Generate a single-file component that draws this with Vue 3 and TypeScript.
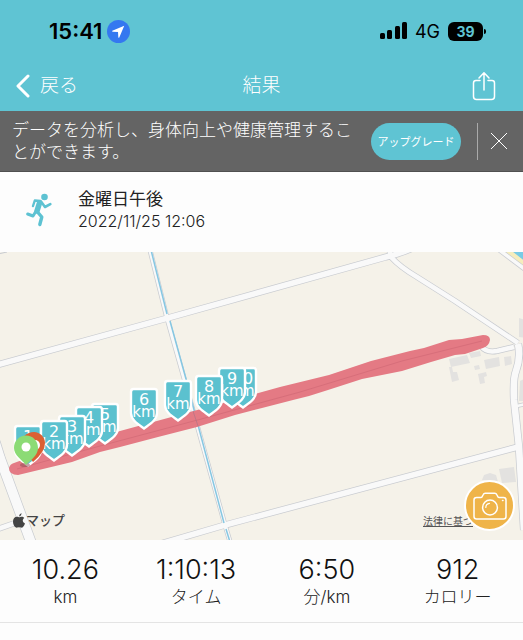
<script setup lang="ts">
interface Pin { km: number; x: number; y: number }
interface Stat { value: string; label: string }

const pins: Pin[] = [
  { km: 10, x: 243, y: 367 },
  { km: 9, x: 232, y: 367 },
  { km: 8, x: 209, y: 375 },
  { km: 7, x: 178, y: 380 },
  { km: 6, x: 144, y: 388 },
  { km: 5, x: 105, y: 403 },
  { km: 4, x: 89, y: 406 },
  { km: 3, x: 72, y: 415 },
  { km: 1, x: 28, y: 425 },
  { km: 2, x: 54, y: 420 },
]

const stats: Stat[] = [
  { value: '10.26', label: 'km' },
  { value: '1:10:13', label: 'タイム' },
  { value: '6:50', label: '分/km' },
  { value: '912', label: 'カロリー' },
]

interface Road { d: string; width: number }

const roads: Road[] = [
  { d: 'M-5 365.500L166 318.500L386 257Q400 254 415 247', width: 7 },
  { d: 'M149 246L167 318L182 371L225 525L231 545', width: 5 },
  { d: 'M388 244L391 257Q400 267 417 277L455 301L518 343', width: 6 },
  { d: 'M-5 442L0 458L32 545', width: 11 },
  { d: 'M-5 530L18 522', width: 6 },
  { d: 'M160 544L225 525L518 447', width: 7 },
  { d: 'M498 249L526 270', width: 5 },
  { d: 'M481 346Q486 353 497 351L514 347', width: 6 },
  { d: 'M518 344Q521 357 516 371Q513 378 514 400L519 447L524 530', width: 8 },
  { d: 'M517 406L526 404', width: 4 },
]
</script>

<template>
  <main class="screen">
    <header class="top">
      <div class="status">
        <div class="clock">
          <span>15:41</span>
          <svg class="locate" viewBox="0 0 24 24" aria-hidden="true">
            <circle cx="12" cy="12" r="12" fill="#3478f0" />
            <path d="M18 6L5.500 11.200Q5 12 6 12.200L11.500 12.500L11.800 18Q12.200 19 12.800 18.200Z" fill="#fff" />
          </svg>
        </div>
        <div class="signals">
          <svg class="bars" viewBox="0 0 28 18" aria-hidden="true">
            <rect x="0" y="11" width="5" height="6" rx="1.500" />
            <rect x="7" y="8" width="5" height="9" rx="1.500" />
            <rect x="15" y="4" width="5" height="13" rx="1.500" />
            <rect x="22" y="0" width="5" height="17" rx="1.500" />
          </svg>
          <span class="network">4G</span>
          <span class="battery">39</span>
        </div>
      </div>
      <nav class="nav">
        <button class="back" type="button">
          <svg viewBox="0 0 16 24" aria-hidden="true"><path d="M13 2L3 12L13 22" /></svg>
          <span>戻る</span>
        </button>
        <h1>結果</h1>
        <button class="share" type="button" aria-label="共有">
          <svg viewBox="0 0 24 30" aria-hidden="true">
            <path d="M8 9.500H4Q1.500 9.500 1.500 12V25.500Q1.500 28.500 4.500 28.500H19.500Q22.500 28.500 22.500 25.500V12Q22.500 9.500 20 9.500H16M12 19V2M7 7L12 1.800L17 7" />
          </svg>
        </button>
      </nav>
    </header>

    <section class="promo">
      <p>データを分析し、身体向上や健康管理することができます。</p>
      <button class="upgrade" type="button">アップグレード</button>
      <button class="close" type="button" aria-label="閉じる">
        <svg viewBox="0 0 18 18" aria-hidden="true"><path d="M1 1L17 17M17 1L1 17" /></svg>
      </button>
    </section>

    <section class="activity">
      <svg class="runner" viewBox="0 0 26 34" aria-hidden="true">
        <circle cx="18.500" cy="4" r="3.300" fill="#5dc2d2" stroke="none" />
        <path d="M7 13L8.800 7.500L14.500 8" stroke-width="2.400" />
        <path d="M15 8.500L19 14L24.300 11.200" stroke-width="2.600" />
        <path d="M13.500 10L11 18" stroke-width="5.500" />
        <path d="M9.500 19L7 23L1.700 21" stroke-width="3" />
        <path d="M11.500 19L15.800 24L13.800 31.500" stroke-width="3.400" />
      </svg>
      <div>
        <h2>金曜日午後</h2>
        <time datetime="2022-11-25T12:06">2022/11/25 12:06</time>
      </div>
    </section>

    <section class="map">
      <svg class="canvas" viewBox="0 252 523 288" role="img" aria-label="ルート">
        <rect y="252" width="523" height="288" fill="#f5f2e9" />
        <path d="M498 248L526 270V248Z" fill="#f6edbd" />
        <path d="M508 248L526 262V248Z" fill="#78cbe5" />
        <g fill="none" stroke="#c8cbd0">
          <path v-for="road in roads" :key="road.d" :d="road.d" :stroke-width="road.width" />
          <path d="M-2 254L7 252" />
        </g>
        <g fill="none" stroke="#f9f9f9">
          <path v-for="road in roads" :key="road.d" :d="road.d" :stroke-width="road.width - 1.4" />
        </g>
        <path d="M151 250L167 314M170 321L186 379L198 425L224 523M226 529L230 542" fill="none" stroke="#86c7e2" stroke-width="1.500" />
        <g fill="#e3e2e0">
          <path d="M449 359L467 355L470 363L451 367Z" />
          <path d="M449 367H452L453 372L457 372L459 380L452 382Z" />
          <path d="M469 353L480 351L481 356L471 358Z" />
          <path d="M474 366L479 365L480 369L475 370Z" />
          <path d="M484 360L499 357L500 366L486 369Z" />
          <path d="M478 374L486 372L487 376L484 377L485 383L480 384Z" />
          <path d="M504 357L511 356L512 364L505 366Z" />
          <path d="M519 318L526 320V338L519 337Z" />
          <path d="M520 381L526 378V401H519Z" />
          <path d="M499 469L514 467L516 482L502 483Z" />
          <path d="M482 480L484 475L490 473L496 475L498 482Z" />
        </g>

        <path d="M14 463L61 446L120 431L201 409L262 392L280 387L329 375L371 361L410 351L424 348L449 340L462 339L483 335Q490 335 490 340Q489 346 483 348L465 354L455 355L431 362L402 371L362 379L328 390L309 396L293 400L262 408L235 415L197 427L158 437L120 447L100 452L72 462L18 475Q9 475 9 468Q10 464 14 463Z" fill="#e47a84" />
        <path d="M17 469L100 446L205 418L300 392L402 361L482 341" fill="none" stroke="#ca6270" stroke-opacity=".5" />
        <path d="M193 411L198 426" fill="none" stroke="#a97387" stroke-opacity=".6" />

        <g v-for="pin in pins" :key="pin.km" :transform="`translate(${pin.x} ${pin.y})`">
          <path d="M-10.500 1Q-13 1 -13 4V25C-13 32 -6 36 0 40.500C6 36 13 32 13 25V4Q13 1 10.500 1Z" fill="#5bc1cf" stroke="#fff" stroke-width="2.400" />
          <text class="pin-number" y="17">{{ pin.km }}</text>
          <text class="pin-unit" y="29">km</text>
        </g>

        <path d="M34 432C27 432 21 437 21 444C21 452 30 457 33 462Q45 452 45 443C45 437 40 432 34 432Z" fill="#db6032" />
        <circle cx="35" cy="445" r="5" fill="#fff" />
        <ellipse cx="25" cy="465" rx="5" ry="2" fill="#874850" opacity=".5" />
        <path d="M26 435.500C19 435.500 14 441 14 448C14 455 22 460 26 465C31 460 38 455 38 448C38 441 33 435.500 26 435.500Z" fill="#8cdb75" />
        <circle cx="26" cy="447" r="4.500" fill="#fff" />
      </svg>

      <div class="brand">
        <svg viewBox="0 0 12 15" aria-hidden="true">
          <path d="M8.500 0Q8.500 3 6 3.500Q6 1 8.500 0ZM6 4.300C7 4.300 9.600 2.700 11.300 5C9 6.500 9.300 9.500 12 10.500C11 13.500 9.500 15 8 14.600Q6 13.700 4.200 14.600C2 15.200 0 11.500 0 8.500C0 4.500 3 3 6 4.300Z" fill="currentColor" />
        </svg>
        <span>マップ</span>
      </div>
      <a class="legal" href="#legal">法律に基づ</a>
      <button class="camera" type="button" aria-label="写真を追加">
        <svg viewBox="0 0 34 28" aria-hidden="true">
          <path d="M3.500 5.500H8Q9 5.500 9.500 4L10.300 2.500Q10.800 1.200 12.200 1.200H21.800Q23.200 1.200 23.700 2.500L24.500 4Q25 5.500 26 5.500H30.500Q33 5.500 33 8V24.500Q33 27 30.500 27H3.500Q1 27 1 24.500V8Q1 5.500 3.500 5.500Z" />
          <circle cx="17" cy="15.500" r="7.400" />
          <path d="M12.800 15.500Q12.800 11.800 16.500 11.300" stroke-width="1.200" />
          <path d="M29.500 8.500H30" />
        </svg>
      </button>
    </section>

    <dl class="stats">
      <div v-for="stat in stats" :key="stat.label">
        <dt>{{ stat.label }}</dt>
        <dd>{{ stat.value }}</dd>
      </div>
    </dl>
  </main>
</template>

<style>
body {
  margin: 0;
  background: #fdfdfd;
}
</style>

<style scoped>
.screen {
  font-family: Inter, "Noto Sans CJK JP", sans-serif;
  color: #222;
}

button {
  border: 0;
  padding: 0;
  background: none;
  color: inherit;
  font: inherit;
  cursor: pointer;
}

svg {
  display: block;
}

h1,
h2,
p,
dl,
dd {
  margin: 0;
  font-weight: 300;
}

.top {
  background: #5fc4d3;
}

.status {
  display: flex;
  justify-content: space-between;
  align-items: center;
  height: 60px;
  padding: 2px 40px 0 49px;
  box-sizing: border-box;
  color: #000;
}

.clock,
.signals {
  display: flex;
  align-items: center;
}

.clock {
  gap: 5px;
  font-size: 22px;
  font-weight: 600;
}

.locate {
  width: 23px;
}

.bars {
  width: 28px;
}

.network {
  margin: 0 8px 0 7px;
  font-size: 18px;
}

.battery {
  position: relative;
  width: 35px;
  border-radius: 6px;
  background: #000;
  color: #5fc4d3;
  font-size: 14px;
  font-weight: 700;
  line-height: 19px;
  text-align: center;
}

.battery::after {
  content: "";
  position: absolute;
  top: 7px;
  right: -3px;
  width: 2px;
  height: 5px;
  border-radius: 0 2px 2px 0;
  background: #000;
}

.nav {
  display: grid;
  grid-template-columns: 1fr auto 1fr;
  align-items: center;
  height: 51px;
  padding: 0 27px 0 15px;
  box-sizing: border-box;
  color: #fff;
}

.back {
  display: flex;
  align-items: center;
  gap: 9px;
  font-size: 19px;
  line-height: 28px;
  font-weight: 300;
}

.back svg {
  width: 16px;
  fill: none;
  stroke: #fff;
  stroke-width: 3;
  stroke-linecap: round;
  stroke-linejoin: round;
}

h1 {
  padding-left: 12px;
  font-size: 19px;
  line-height: 28px;
}

.share {
  justify-self: end;
}

.share svg {
  width: 24px;
  fill: none;
  stroke: #fff;
  stroke-width: 1.500;
  stroke-linecap: round;
  stroke-linejoin: round;
}

.promo {
  display: flex;
  align-items: center;
  padding: 8px 15px 8px 12px;
  border-bottom: 1px solid #505050;
  background: #646464;
  color: #fff;
}

.promo p {
  flex: 1;
  font-size: 17px;
  line-height: 22px;
}

.upgrade {
  flex: none;
  width: 90px;
  height: 37px;
  margin-left: 15px;
  border-radius: 19px;
  background: #5fc4d3;
  font-size: 11px;
}

.close {
  flex: none;
  display: flex;
  align-items: center;
  height: 37px;
  margin-left: 16px;
  padding-left: 12px;
  border-left: 1px solid #aaa;
}

.close svg {
  width: 18px;
  fill: none;
  stroke: #fff;
}

.activity {
  display: flex;
  align-items: center;
  gap: 26px;
  height: 80px;
  padding: 0 26px;
  box-sizing: border-box;
}

.runner {
  width: 26px;
  margin-top: -4px;
  fill: none;
  stroke: #5dc2d2;
  stroke-linecap: round;
  stroke-linejoin: round;
}

.activity h2 {
  font-size: 17px;
  font-weight: 400;
  line-height: 24px;
}

.activity time {
  display: block;
  margin-bottom: 6px;
  font-size: 16px;
  font-weight: 300;
  line-height: 20px;
}

.map {
  position: relative;
}

.canvas {
  width: 100%;
  height: auto;
}

.pin-number,
.pin-unit {
  fill: #fff;
  font-family: "DejaVu Sans", sans-serif;
  font-size: 16px;
  text-anchor: middle;
}

.pin-unit {
  font-size: 15px;
}

.brand {
  position: absolute;
  bottom: 10px;
  left: 13px;
  display: flex;
  align-items: center;
  gap: 1px;
  color: #444;
  font-size: 13px;
  font-weight: 500;
  line-height: 20px;
}

.brand svg {
  width: 12px;
}

.legal {
  position: absolute;
  right: 50px;
  bottom: 11px;
  color: #555;
  font-size: 10px;
  line-height: 16px;
}

.camera {
  position: absolute;
  right: 8px;
  bottom: 9px;
  display: grid;
  place-items: center;
  width: 51px;
  height: 51px;
  border: 2px solid #fff;
  border-radius: 50%;
  box-sizing: border-box;
  background: #efb449;
}

.camera svg {
  width: 34px;
  fill: none;
  stroke: #fff;
  stroke-width: 1.500;
  stroke-linecap: round;
}

.stats {
  display: grid;
  grid-template-columns: repeat(4, 1fr);
  padding: 13px 0 15px;
  border-bottom: 1px solid #e4e4e4;
  text-align: center;
}

.stats div {
  display: flex;
  flex-direction: column-reverse;
}

.stats dt {
  font-size: 17px;
  font-weight: 300;
  line-height: 20px;
}

.stats dd {
  color: #111;
  font-size: 27px;
  line-height: 34px;
}
</style>
